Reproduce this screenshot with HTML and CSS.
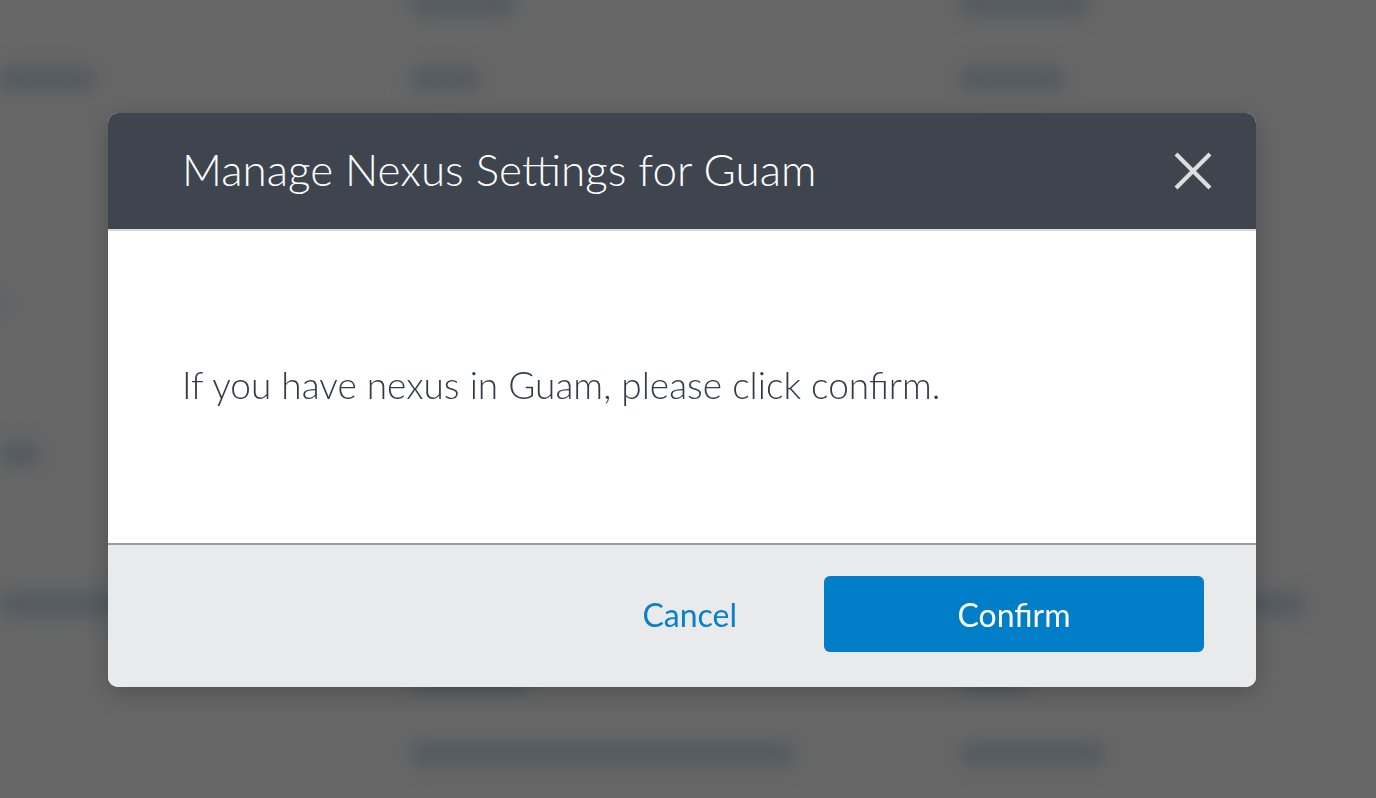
FILE: index.html
```html
<!DOCTYPE html>
<html lang="en">
<head>
<meta charset="utf-8">
<title>Manage Nexus Settings for Guam</title>
<link rel="stylesheet" href="styles.css">
</head>
<body>
<div class="page">
  <div class="bg-rows">
    <div class="bg-row"><span class="blob a w0"></span><span class="blob b w105"></span><span class="blob c w130"></span></div>
    <div class="bg-row"><span class="blob a w95"></span><span class="blob b w70"></span><span class="blob c w105"></span></div>
    <div class="bg-row"></div>
    <div class="bg-row"></div>
    <div class="bg-row"><span class="blob a w6"></span></div>
    <div class="bg-row"></div>
    <div class="bg-row"><span class="blob a w40"></span></div>
    <div class="bg-row"></div>
    <div class="bg-row"><span class="blob a w120"></span><span class="blob b w0"></span><span class="blob c w345"></span></div>
    <div class="bg-row"><span class="blob a w0"></span><span class="blob b w120"></span><span class="blob c w70"></span></div>
    <div class="bg-row"><span class="blob a w0"></span><span class="blob b w385"></span><span class="blob c w145"></span></div>
  </div>
</div>
<div class="backdrop">
  <div class="modal" role="dialog" aria-labelledby="modal-title">
    <div class="modal-header">
      <h1 id="modal-title" class="modal-title">Manage Nexus Settings for Guam</h1>
      <button class="close-btn" aria-label="Close">
        <svg width="38" height="38" viewBox="0 0 38 38"><path d="M2 2 L36 36 M36 2 L2 36" stroke="#dedede" stroke-width="4.2" fill="none"/></svg>
      </button>
    </div>
    <div class="modal-body">
      <p class="modal-text">If you have nexus in Guam, please click confirm.</p>
    </div>
    <div class="modal-footer">
      <button class="btn-cancel">Cancel</button>
      <button class="btn-confirm">Confirm</button>
    </div>
  </div>
</div>
</body>
</html>
```
FILE: styles.css
```css
html, body {
  margin: 0;
  padding: 0;
  width: 1376px;
  height: 798px;
  overflow: hidden;
  background: #676767;
  font-family: Lato, "Open Sans", "Liberation Sans", sans-serif;
}

.page {
  width: 1376px;
  height: 798px;
  overflow: hidden;
}

.bg-rows {
  display: flex;
  flex-direction: column;
  margin-top: -34px;
  filter: blur(9px);
}

.bg-row {
  height: 75px;
  display: grid;
  grid-template-columns: 410px 550px 1fr;
  align-items: center;
}

.blob {
  display: block;
  height: 24px;
  border-radius: 8px;
  background: #535a61;
  justify-self: start;
}

.w0 { width: 0; background: transparent; }
.w6 { width: 8px; }
.w40 { width: 40px; }
.w70 { width: 70px; }
.w95 { width: 95px; }
.w105 { width: 105px; }
.w120 { width: 120px; }
.w130 { width: 130px; }
.w145 { width: 145px; }
.w345 { width: 345px; }
.w385 { width: 385px; }

.backdrop {
  position: fixed;
  inset: 0;
  display: flex;
  align-items: flex-start;
  justify-content: flex-start;
  padding: 113px 0 0 108px;
  box-sizing: border-box;
}

.modal {
  width: 1148px;
  height: 574px;
  border-radius: 10px;
  overflow: hidden;
  display: flex;
  flex-direction: column;
  box-shadow: 0 6px 24px rgba(0, 0, 0, 0.22);
  background: #ffffff;
}

.modal-header {
  height: 116px;
  flex: none;
  background: #3e454e;
  border-bottom: 2px solid #d9d9d9;
  display: flex;
  align-items: center;
  justify-content: space-between;
  padding: 0 44px 0 74px;
}

.modal-title {
  margin: 0;
  font-family: Lato, "Open Sans", sans-serif;
  font-weight: 300;
  font-size: 44px;
  color: #ffffff;
  padding-bottom: 5px;
}

.close-btn {
  background: none;
  border: 0;
  padding: 0;
  width: 38px;
  height: 38px;
  display: flex;
  align-items: center;
  justify-content: center;
}

.modal-body {
  height: 312px;
  flex: none;
  display: flex;
  align-items: center;
  padding: 0 74px;
  border-bottom: 2px solid #9b9b9b;
}

.modal-text {
  margin: 0;
  font-family: Lato, "Open Sans", sans-serif;
  font-weight: 300;
  font-size: 37px;
  color: #333b46;
  padding-bottom: 5px;
}

.modal-footer {
  flex: 1;
  background: #e9eaec;
  display: flex;
  align-items: center;
  justify-content: flex-end;
  padding: 0 52px 4px 0;
  gap: 87px;
}

.btn-cancel {
  background: none;
  border: 0;
  padding: 0;
  font-family: Lato, "Open Sans", sans-serif;
  font-size: 32px;
  font-weight: 400;
  color: #0a80c8;
  cursor: pointer;
}

.btn-confirm {
  width: 380px;
  height: 76px;
  border: 0;
  border-radius: 6px;
  background: #007ec8;
  color: #ffffff;
  font-family: Lato, "Open Sans", sans-serif;
  font-size: 32px;
  font-weight: 400;
  cursor: pointer;
}
```
